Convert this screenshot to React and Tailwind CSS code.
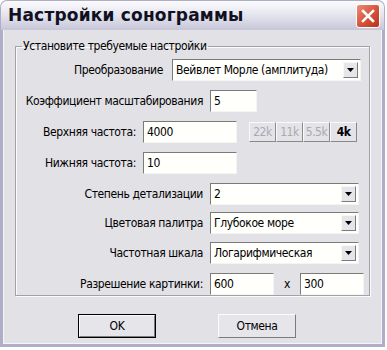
import React from 'react';

const font = { fontFamily: '"DejaVu Sans Condensed", "DejaVu Sans", Verdana, sans-serif' };

const Sunken = ({ className = '', children }) => (
    <div className={`h-[22px] bg-[#fffffb] border-t border-l border-[#7a7a7a] border-r-[#f4f4f4] border-b-[#f4f4f4] border-r border-b flex items-center px-[3px] text-[12px] text-black ${className}`}>
        {children}
    </div>
);

const Combo = ({ className = '', value }) => (
    <div className={`h-[22px] bg-[#fffffb] border-t border-l border-[#7a7a7a] border-r-[#f4f4f4] border-b-[#f4f4f4] border-r border-b flex items-center pl-[3px] pr-[2px] ${className}`}>
        <span className="flex-1 text-[12px] text-black whitespace-nowrap">{value}</span>
        <div className="w-[15px] h-[16px] bg-[#e6e5ea] border border-[#f8f8f8] border-r-[#7c7c7c] border-b-[#7c7c7c] flex items-center justify-center">
            <svg width="7" height="4" viewBox="0 0 7 4"><path d="M0 0h7L3.5 4z" fill="#000" /></svg>
        </div>
    </div>
);

const Row = ({ label, width, gap = 7, children, mt }) => (
    <div className={`flex items-center ${mt}`}>
        <div className="text-right text-[12px] text-black shrink-0 whitespace-nowrap" style={{ width, marginRight: gap }}>{label}</div>
        {children}
    </div>
);

const FreqBtn = ({ label, active }) => (
    <div className={`w-[27px] h-[20px] flex items-center justify-center text-[12px] tracking-[-0.5px] bg-[#e4e3e8] border border-[#fafafa] border-r-[#8a8a8a] border-b-[#8a8a8a] ${active ? 'text-black font-bold' : 'text-[#a9a9b0]'}`}>
        {label}
    </div>
);

const Button = ({ label, isDefault }) => (
    <div className={`w-[78px] h-[24px] ${isDefault ? 'border border-black' : ''}`}>
        <div className="w-full h-full flex items-center justify-center text-[12px] text-black bg-[#e6e5ea] border border-[#fcfcfc] border-r-[#7c7c7c] border-b-[#7c7c7c]">
            {label}
        </div>
    </div>
);

const App = () => {
    return (
        <div className="w-[387px] h-[350px] bg-white tracking-[-0.38px]" style={font}>
            <div className="w-[385px] h-[347px] rounded-t-[7px] bg-[#aeaec6] p-[1px] flex flex-col">
                {/* title bar */}
                <div className="h-[29px] shrink-0 rounded-t-[6px] bg-gradient-to-b from-[#fbfbfd] via-[#e4e4ee] to-[#c6c6d8] flex items-center pl-[7px] pr-[4px]">
                    <span className="flex-1 text-[17px] font-bold text-[#111122] tracking-[0.2px]" style={{ fontFamily: '"DejaVu Sans", Verdana, sans-serif' }}>
                        Настройки сонограммы
                    </span>
                    <div className="w-[24px] h-[24px] rounded-[3px] border border-white bg-gradient-to-br from-[#ec8c78] via-[#d8553c] to-[#b8301c] flex items-center justify-center">
                        <svg width="14" height="14" viewBox="0 0 14 14">
                            <path d="M2 2l10 10M12 2L2 12" stroke="#fff" strokeWidth="2.6" strokeLinecap="square" />
                        </svg>
                    </div>
                </div>

                {/* body */}
                <div className="flex-1 mx-[2px] mb-[2px] bg-[#e2e1e6] border-l border-r border-b border-[#f4f4f8] px-[11px] pt-[9px]">
                    <fieldset className="border border-[#a2a1a6] shadow-[inset_1px_1px_0_#fbfbfb,1px_1px_0_#fbfbfb] h-[257px] px-0">
                        <legend className="ml-[6px] px-[1px] text-[12px] text-black leading-[15px]">Установите требуемые настройки</legend>

                        <Row label="Преобразование" width={147} gap={9} mt="mt-[5px]">
                            <Combo className="w-[189px]" value="Вейвлет Морле (амплитуда)" />
                        </Row>
                        <Row label="Коэффициент масштабирования" width={187} mt="mt-[9px]">
                            <Sunken className="w-[47px]">5</Sunken>
                        </Row>
                        <Row label="Верхняя частота:" width={120} mt="mt-[9px]">
                            <Sunken className="w-[94px]">4000</Sunken>
                            <div className="flex ml-[12px]">
                                <FreqBtn label="22k" />
                                <FreqBtn label="11k" />
                                <FreqBtn label="5.5k" />
                                <FreqBtn label="4k" active />
                            </div>
                        </Row>
                        <Row label="Нижняя частота:" width={120} mt="mt-[9px]">
                            <Sunken className="w-[94px]">10</Sunken>
                        </Row>
                        <Row label="Степень детализации" width={187} mt="mt-[9px]">
                            <Combo className="w-[149px]" value="2" />
                        </Row>
                        <Row label="Цветовая палитра" width={187} mt="mt-[7px]">
                            <Combo className="w-[149px]" value="Глубокое море" />
                        </Row>
                        <Row label="Частотная шкала" width={187} mt="mt-[8px]">
                            <Combo className="w-[149px]" value="Логарифмическая" />
                        </Row>
                        <Row label="Разрешение картинки:" width={187} mt="mt-[9px]">
                            <Sunken className="w-[64px]">600</Sunken>
                            <span className="text-[12px] text-black mx-[10px]">x</span>
                            <Sunken className="w-[64px]">300</Sunken>
                        </Row>
                    </fieldset>

                    <div className="flex mt-[18px] pl-[63px] gap-[62px]">
                        <Button label="OK" isDefault />
                        <Button label="Отмена" />
                    </div>
                </div>
            </div>
        </div>
    );
};

export default App;
